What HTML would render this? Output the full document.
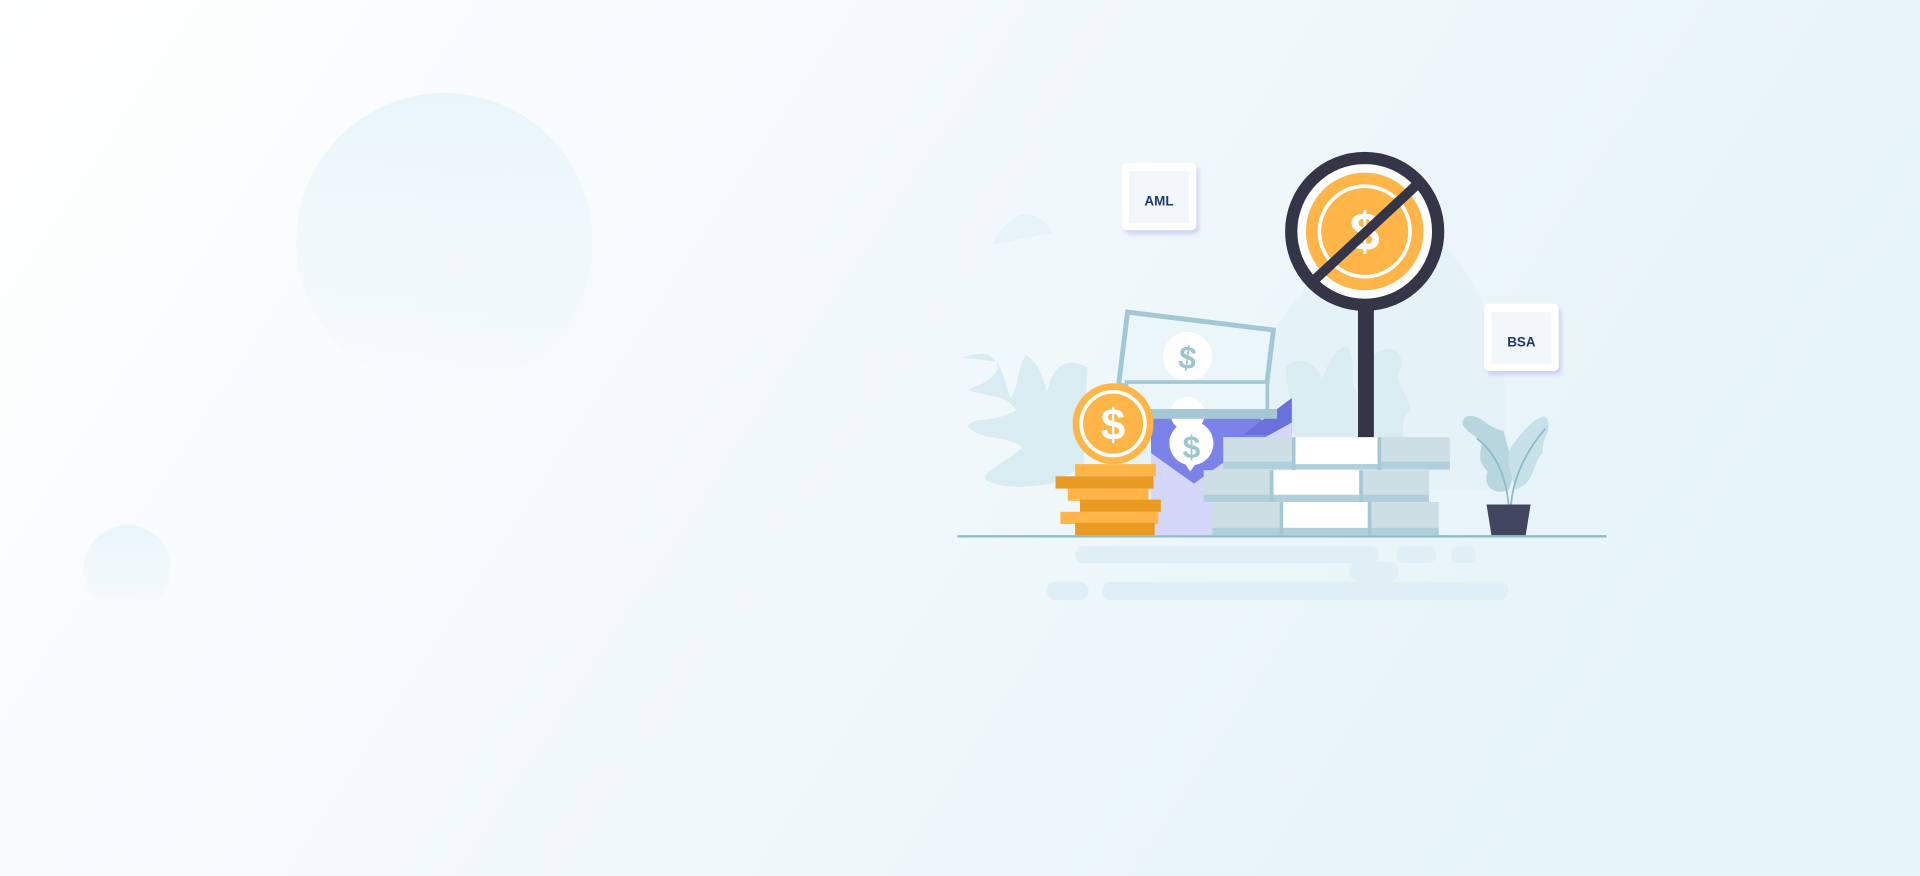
<!DOCTYPE html>
<html><head><meta charset="utf-8"><style>
html,body{margin:0;padding:0;width:1920px;height:876px;overflow:hidden}
svg{display:block}
</style></head><body>
<svg width="1920" height="876" viewBox="0 0 1568 715.4" preserveAspectRatio="none" xmlns="http://www.w3.org/2000/svg">
<defs>
<linearGradient id="bg" x1="0" y1="0" x2="1" y2="0.3">
<stop offset="0" stop-color="#ffffff"/><stop offset="1" stop-color="#e6f3f8"/></linearGradient>
<linearGradient id="cg" x1="0" y1="0" x2="0" y2="1">
<stop offset="0" stop-color="#e8f5fb"/><stop offset="0.5" stop-color="#eef7fb" stop-opacity="0.7"/><stop offset="1" stop-color="#e8f5fb" stop-opacity="0"/></linearGradient>
<filter id="sh" x="-30%" y="-30%" width="160%" height="160%"><feDropShadow dx="2" dy="3" stdDeviation="2" flood-color="#b9b4f0" flood-opacity="0.6"/></filter>
</defs>
<rect width="1568" height="716" fill="url(#bg)"/>
<circle cx="363" cy="197" r="121" fill="url(#cg)"/>
<circle cx="104" cy="465" r="36" fill="url(#cg)"/>
<path d="M900 400 C900 340 960 320 1010 300 C1060 260 1080 190 1130 182 C1180 178 1220 240 1230 320 L1230 400 Z" fill="#e5f2f7"/>
<path d="M810 200 C820 180 840 160 860 190 Z" fill="#e8f3f8"/>
<g fill="#d8ecf2">
<path d="M785 292 C800 288 810 285 815 300 C812 310 800 315 790 318 C805 325 820 320 830 335 C815 345 795 340 790 348 C800 360 820 355 835 365 C820 380 800 385 805 392 C820 400 840 398 860 395 L885 380 L888 300 C870 290 860 300 855 320 C850 300 845 295 838 290 C830 300 833 315 825 325 C820 310 818 298 812 295 Z"/>
<path d="M1050 300 C1060 290 1075 295 1080 310 C1085 295 1090 285 1100 283 C1110 300 1100 310 1108 320 L1108 385 L1060 385 C1055 370 1065 360 1050 345 C1060 335 1050 320 1050 300Z"/>
<path d="M1122 290 C1135 280 1145 285 1145 300 C1135 310 1150 320 1152 335 C1140 345 1150 360 1145 372 L1122 380Z"/>
</g>
<g fill="#dfeff5">
<rect x="878" y="446" width="100" height="14" rx="7"/>
<rect x="968" y="446" width="158" height="14" rx="7"/>
<rect x="1140" y="446" width="33" height="14" rx="7"/>
<rect x="1185" y="446" width="21" height="14" rx="7"/>
<rect x="1102" y="459" width="40" height="16" rx="8"/>
<rect x="855" y="475" width="34" height="15" rx="7"/>
<rect x="900" y="475" width="332" height="15" rx="7"/>
</g>
<line x1="782" y1="438" x2="1312" y2="438" stroke="#8fbcc8" stroke-width="2"/>
<rect x="916" y="133" width="61" height="55" rx="4" fill="#fff" filter="url(#sh)"/>
<rect x="922" y="140" width="49" height="42" fill="#f1f7fb"/>
<text x="946.5" y="168" font-family="Liberation Sans, sans-serif" font-size="11" font-weight="bold" fill="#1d3a6e" text-anchor="middle">AML</text>
<rect x="1212" y="248" width="61" height="55" rx="4" fill="#fff" filter="url(#sh)"/>
<rect x="1218" y="255" width="49" height="42" fill="#f1f7fb"/>
<text x="1242.5" y="283" font-family="Liberation Sans, sans-serif" font-size="11" font-weight="bold" fill="#1d3a6e" text-anchor="middle">BSA</text>
<path d="M940 398 L940 340 L967 311 L1055 355 L1055 437 L990 437Z" fill="#7b83e8"/>
<path d="M1015 355 L1055 325 L1055 355Z" fill="#6a71dd"/>
<g transform="rotate(7 977 290)">
<rect x="917" y="262" width="120" height="60" fill="#eaf6fa" stroke="#a3c8d3" stroke-width="4"/>
<circle cx="970" cy="292" r="20" fill="#fff"/>
<text x="970" y="302" font-family="Liberation Sans, sans-serif" font-size="26" font-weight="bold" fill="#9ec6d1" text-anchor="middle">$</text>
</g>
<rect x="920" y="312" width="115" height="26" fill="#eaf6fa" stroke="#a3c8d3" stroke-width="3"/>
<circle cx="970" cy="338" r="14" fill="#fff"/>
<rect x="933" y="334" width="110" height="8" fill="#a3c8d3"/>
<path d="M940 370 L975 395 L1010 370 L1055 345 L1055 437 L940 437Z" fill="#d4d6fa"/>
<path d="M955 360 C955 345 990 345 990 360 L972 385Z" fill="#fff"/>
<circle cx="973" cy="362" r="18" fill="#fff"/>
<text x="973" y="374" font-family="Liberation Sans, sans-serif" font-size="26" font-weight="bold" fill="#9ec6d1" text-anchor="middle">$</text>
<rect x="878" y="379" width="66" height="10" fill="#ffb547"/>
<rect x="862" y="389" width="80" height="10" fill="#e99a22"/>
<rect x="872" y="399" width="66" height="10" fill="#ffb547"/>
<rect x="882" y="408" width="66" height="10" fill="#e99a22"/>
<rect x="866" y="418" width="80" height="10" fill="#ffb547"/>
<rect x="878" y="427" width="65" height="10" fill="#e99a22"/>
<ellipse cx="909" cy="346" rx="33" ry="33" fill="#ffb547"/>
<circle cx="909" cy="346" r="26" fill="none" stroke="#fff" stroke-width="3"/>
<text x="909" y="359" font-family="Liberation Sans, sans-serif" font-size="36" font-weight="bold" fill="#fff" text-anchor="middle">$</text>
<g>
<rect x="999" y="357" width="185" height="27" fill="#cddfe5"/><rect x="999" y="377" width="185" height="6" fill="#afd0da"/><rect x="1055" y="357" width="72" height="22" fill="#fff"/><rect x="1055" y="357" width="3" height="27" fill="#a3c8d3"/><rect x="1125" y="357" width="3" height="27" fill="#a3c8d3"/>
<rect x="983" y="384" width="184" height="26" fill="#cddfe5"/><rect x="983" y="404" width="184" height="6" fill="#afd0da"/><rect x="1040" y="384" width="72" height="20" fill="#fff"/><rect x="1037" y="384" width="3" height="26" fill="#a3c8d3"/><rect x="1110" y="384" width="3" height="26" fill="#a3c8d3"/>
<rect x="990" y="410" width="185" height="27" fill="#cddfe5"/><rect x="990" y="431" width="185" height="6" fill="#afd0da"/><rect x="1047" y="410" width="72" height="21" fill="#fff"/><rect x="1045" y="410" width="3" height="27" fill="#a3c8d3"/><rect x="1117" y="410" width="3" height="27" fill="#a3c8d3"/>
</g>
<rect x="1109" y="245" width="13" height="112" fill="#343648"/>
<circle cx="1114.5" cy="189" r="60" fill="#fff" stroke="#343648" stroke-width="10"/>
<circle cx="1114.5" cy="189" r="48" fill="#ffb547"/>
<circle cx="1114.5" cy="189" r="37" fill="none" stroke="#fff" stroke-width="3"/>
<text x="1114.5" y="204" font-family="Liberation Sans, sans-serif" font-size="44" font-weight="bold" fill="#fff" text-anchor="middle">$</text>
<line x1="1072" y1="230" x2="1158" y2="150" stroke="#343648" stroke-width="8"/>
<path d="M1210 360 C1195 350 1190 345 1198 340 C1210 338 1215 350 1228 352 C1232 370 1240 385 1232 400 C1222 405 1210 398 1215 385 C1205 375 1210 370 1210 360Z" fill="#b7d6de"/>
<path d="M1236 395 C1232 380 1228 370 1238 360 C1245 350 1255 340 1262 340 C1270 350 1258 358 1260 370 C1250 380 1255 395 1236 400Z" fill="#c7e1e8"/>
<path d="M1206 358 C1222 370 1230 390 1232 412 M1234 412 C1236 390 1245 370 1262 350" fill="none" stroke="#8fbcc8" stroke-width="1.5"/>
<path d="M1214 412 L1250 412 L1246 437 L1218 437Z" fill="#424560"/>
</svg>
</body></html>
